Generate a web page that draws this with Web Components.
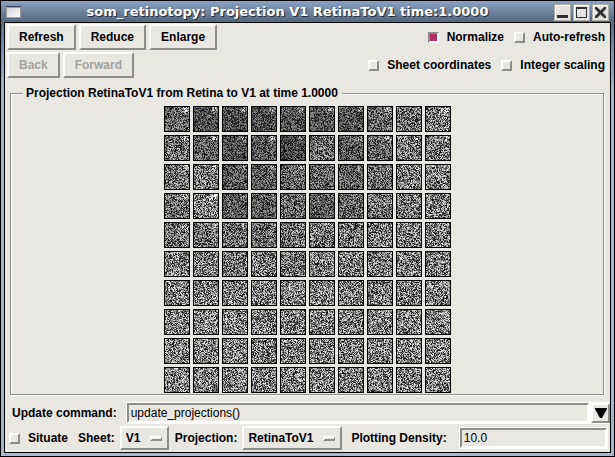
<!DOCTYPE html>
<html lang="en">
<head>
<meta charset="utf-8">
<title>som_retinotopy: Projection V1 RetinaToV1 time:1.0000</title>
<style>
  html, body { margin: 0; }
  body {
    --face: #e8e7e2;
    --shade: #8d8d8b;
    --light: #ffffff;
    font: bold 12px/16px "Liberation Sans", Arial, sans-serif;
    color: #000;
  }
</style>
</head>
<body>
<projection-window></projection-window>

<script>
function define(name, html, setup) {
  const template = document.createElement('template');
  template.innerHTML = '<style>*{box-sizing:border-box}</style>' + html;
  customElements.define(name, class extends HTMLElement {
    constructor() {
      super();
      this.attachShadow({ mode: 'open' }).append(template.content.cloneNode(true));
    }
    connectedCallback() { if (setup) setup(this, this.shadowRoot); }
  });
}

define('title-bar', `
<style>
  :host { display: flex; align-items: center; height: 20px; padding: 0 2px;
    font: bold 13px/18px "DejaVu Sans", sans-serif; color: #fff; }
  h1 { flex: 1; margin: 0; font: inherit; text-align: center; white-space: nowrap;
    text-shadow: 1px 1px 1px #1d2836; }
  .menu, .tools button { display: block; padding: 0; border: 0; background: none; }
  .menu { width: 15px; height: 12px; }
  .tools { display: flex; gap: 2px; }
  svg { display: block; }
</style>
<button class="menu" aria-label="Window menu">
  <svg width="15" height="12" viewBox="0 0 15 12"><defs><linearGradient id="g" x2="1" y2="1"><stop stop-color="#cfd3d8"/><stop offset="1" stop-color="#fff"/></linearGradient></defs>
  <rect width="15" height="12" fill="#9b9a97"/><rect width="15" height="1" fill="#34445c"/><rect x="1" y="2" width="13" height="9" fill="url(#g)"/></svg>
</button>
<h1><slot></slot></h1>
<div class="tools">
  <button aria-label="Minimize"><svg width="17" height="17" viewBox="0 0 17 17"><rect width="17" height="17" fill="#b0ada7"/><rect x="1" y="1" width="15" height="15" fill="#fff"/><rect x="2" y="2" width="14" height="14" fill="#e5e3df"/><rect x="3" y="11" width="11" height="3" fill="#2d3132"/></svg></button>
  <button aria-label="Maximize"><svg width="17" height="17" viewBox="0 0 17 17"><rect width="17" height="17" fill="#b0ada7"/><rect x="1" y="1" width="15" height="15" fill="#fff"/><rect x="2" y="2" width="14" height="14" fill="#e5e3df"/><path d="M3 3h11v11H3zM4 5v8h9V5z" fill="#2d3132" fill-rule="evenodd"/></svg></button>
  <button aria-label="Close"><svg width="17" height="17" viewBox="0 0 17 17"><rect width="17" height="17" fill="#b0ada7"/><rect x="1" y="1" width="15" height="15" fill="#fff"/><rect x="2" y="2" width="14" height="14" fill="#e5e3df"/><path d="M3 3h2l3.500 3.500L12 3h2v2l-3.500 3.500L14 12v2h-2l-3.500-3.500L5 14H3v-2l3.500-3.500L3 5z" fill="#2d3132"/></svg></button>
</div>`);

define('push-button', `
<style>
  :host { display: block; }
  button { display: block; height: 26px; padding: 0 10px; font: inherit; color: #000;
    background: var(--face); border: 2px solid; border-radius: 0;
    border-color: var(--light) var(--shade) var(--shade) var(--light); }
  button:disabled { color: #a3a3a0; }
</style>
<button><slot></slot></button>`, (host, root) => {
  root.querySelector('button').disabled = host.hasAttribute('disabled');
});

define('check-option', `
<style>
  :host { display: block; }
  label { display: flex; align-items: center; gap: 8px; white-space: nowrap; }
  input { appearance: none; width: 11px; height: 11px; margin: 0; background: var(--face);
    border: 2px solid; border-color: var(--light) var(--shade) var(--shade) var(--light); }
  input:checked { background: #b03060; border-color: var(--shade) var(--light) var(--light) var(--shade); }
</style>
<label><input type="checkbox"><slot></slot></label>`, (host, root) => {
  root.querySelector('input').checked = host.hasAttribute('checked');
});

define('option-menu', `
<style>
  :host { display: block; }
  label { display: flex; align-items: center; gap: 5px; white-space: nowrap; }
  .box { display: grid; align-items: center; }
  select, i { grid-area: 1 / 1; }
  select { appearance: none; height: 24px; margin: 0; padding: 0 26px 0 4px; font: inherit; color: #000;
    background: var(--face); border: 2px solid; border-radius: 0;
    border-color: var(--light) var(--shade) var(--shade) var(--light); }
  i { justify-self: end; width: 12px; height: 5px; margin-right: 7px; pointer-events: none;
    background: var(--face); border: 2px solid; border-width: 2px 1px 2px 2px;
    border-color: var(--light) var(--shade) var(--shade) var(--light); }
</style>
<label><slot></slot><span class="box"><select><option></option></select><i></i></span></label>`, (host, root) => {
  root.querySelector('option').textContent = host.getAttribute('value');
});

define('text-entry', `
<style>
  :host { display: block; min-width: 0; }
  label { display: flex; align-items: center; white-space: nowrap; gap: var(--entry-gap, 9px); }
  .frame { flex: 1; min-width: 0; display: flex; border: 1px solid var(--light); }
  input { flex: 1; min-width: 0; width: 100%; height: 20px; padding: 0 2px; border-radius: 0; outline: 0;
    font: 12px/16px "Liberation Sans", Arial, sans-serif; color: #000; background: var(--face);
    border: 2px solid; border-color: var(--shade) var(--light) var(--light) var(--shade); }
</style>
<label><slot></slot><span class="frame"><input type="text"></span></label>`, (host, root) => {
  root.querySelector('input').value = host.getAttribute('value');
});

define('drop-arrow', `
<style>
  :host { display: block; padding: 1px 0 1px 1px; background: var(--light); }
  button { display: grid; place-items: center; width: 19px; height: 20px; padding: 0;
    background: var(--face); border: 2px solid; border-radius: 0;
    border-color: var(--light) var(--shade) var(--shade) var(--light); }
</style>
<button aria-label="Show command history"><svg width="12" height="10" viewBox="0 0 12 10"><path d="M0 0h12v1L7 10H5L0 1z"/></svg></button>`);

/* One projection field: weights shown as grey levels, with a patch of stronger ones. */
define('weight-tile', `
<style>
  :host { display: block; width: 26px; height: 26px; background: #000; padding: 1px; box-sizing: border-box; }
  canvas { display: block; }
</style>
<canvas width="24" height="24"></canvas>`, (host, root) => {
  let seed = Number(host.dataset.seed) * 7919 + 104729;
  const random = () => {
    seed = (seed + 0x6D2B79F5) | 0;
    let t = Math.imul(seed ^ (seed >>> 15), 1 | seed);
    t = (t + Math.imul(t ^ (t >>> 7), 61 | t)) ^ t;
    return ((t ^ (t >>> 14)) >>> 0) / 4294967296;
  };
  const gain = Number(host.dataset.gain);
  const peak = Number(host.dataset.peak);
  const context = root.querySelector('canvas').getContext('2d');
  const image = context.createImageData(24, 24);
  for (let y = 0; y < 24; y++) {
    for (let x = 0; x < 24; x++) {
      const distance = (x - 20) ** 2 + (y - 2) ** 2;
      const value = (12 + random() * 232) * gain * (1 + peak * Math.exp(-distance / 6));
      const at = (y * 24 + x) * 4;
      image.data[at] = image.data[at + 1] = image.data[at + 2] = Math.min(250, value);
      image.data[at + 3] = 255;
    }
  }
  context.putImageData(image, 0, 0);
});

define('projection-grid', `
<style>
  :host { display: grid; grid-template-columns: repeat(10, 26px); gap: 3px; justify-content: center; }
</style>`, (host, root) => {
  const gains = [
    [76, 60, 60, 60, 62, 62, 62, 76, 86, 94],
    [86, 70, 60, 66, 54, 80, 66, 76, 90, 92],
    [86, 92, 66, 72, 74, 76, 70, 82, 92, 94],
    [86, 98, 68, 70, 80, 66, 76, 88, 92, 96],
    [88, 86, 82, 80, 86, 88, 92, 92, 94, 96],
    [96, 94, 92, 94, 88, 94, 94, 94, 96, 96],
    [98, 98, 98, 96, 96, 96, 94, 96, 96, 98],
    [98, 98, 98, 98, 98, 98, 98, 98, 98, 98],
    [98, 98, 98, 98, 98, 98, 98, 98, 98, 98],
    [98, 98, 98, 98, 98, 98, 98, 98, 98, 98]
  ];
  gains.forEach((row, r) => row.forEach((gain, c) => {
    const tile = document.createElement('weight-tile');
    tile.dataset.seed = r * 10 + c + 1;
    tile.dataset.gain = gain / 100;
    tile.dataset.peak = Math.max(0, 1.2 - r * 0.2 - c * 0.06);
    root.append(tile);
  }));
});

define('titled-frame', `
<style>
  :host { display: block; }
  fieldset { min-width: 0; margin: 0; padding: 5px 8px 1px; border: 1px solid var(--shade);
    box-shadow: 1px 1px 0 var(--light), inset 1px 1px 0 var(--light); }
  legend { padding: 0 4px 0 3px; margin-left: 4px; white-space: nowrap; background: var(--face); }
</style>
<fieldset><legend><slot name="caption"></slot></legend><slot></slot></fieldset>`);

define('projection-window', `
<style>
  :host { display: flex; flex-direction: column; min-height: 100vh; box-sizing: border-box;
    border: 1px solid #000; padding: 1px 3px 3px;
    background: linear-gradient(#8ba2c2, #56697f 20px, #6d86a5 40px, #a9b6c9 90px, #a9b6c9); }
  main { flex: 1; display: flex; flex-direction: column; border: 1px solid #000; background: var(--face);
    padding: 1px 0 0 2px; }
  .row { display: flex; align-items: center; gap: 3px; }
  .tools { padding-right: 5px; margin-bottom: 2px; }
  .checks { display: flex; gap: 10px; margin-left: auto; }
  titled-frame { margin: 5px 6px 0 3px; }
  .command { gap: 0; margin-top: 7px; padding-left: 5px; }
  .command text-entry, .last text-entry { flex: 1; }
  .last { gap: 6px; margin-top: 2px; padding: 0 2px 0 2px; }
  .last check-option { margin-right: 4px; }
  .last text-entry { margin-left: 3px; --entry-gap: 12px; }
</style>
<title-bar>som_retinotopy: Projection V1 RetinaToV1 time:1.0000</title-bar>
<main>
  <div class="row tools">
    <push-button>Refresh</push-button><push-button>Reduce</push-button><push-button>Enlarge</push-button>
    <div class="checks"><check-option checked>Normalize</check-option><check-option>Auto-refresh</check-option></div>
  </div>
  <div class="row tools">
    <push-button disabled>Back</push-button><push-button disabled>Forward</push-button>
    <div class="checks"><check-option>Sheet coordinates</check-option><check-option>Integer scaling</check-option></div>
  </div>
  <titled-frame>
    <span slot="caption">Projection RetinaToV1 from Retina to V1 at time 1.0000</span>
    <projection-grid></projection-grid>
  </titled-frame>
  <div class="row command">
    <text-entry value="update_projections()">Update command:</text-entry><drop-arrow></drop-arrow>
  </div>
  <div class="row last">
    <check-option>Situate</check-option>
    <option-menu value="V1">Sheet:</option-menu>
    <option-menu value="RetinaToV1">Projection:</option-menu>
    <text-entry value="10.0">Plotting Density:</text-entry>
  </div>
</main>`);
</script>
</body>
</html>
